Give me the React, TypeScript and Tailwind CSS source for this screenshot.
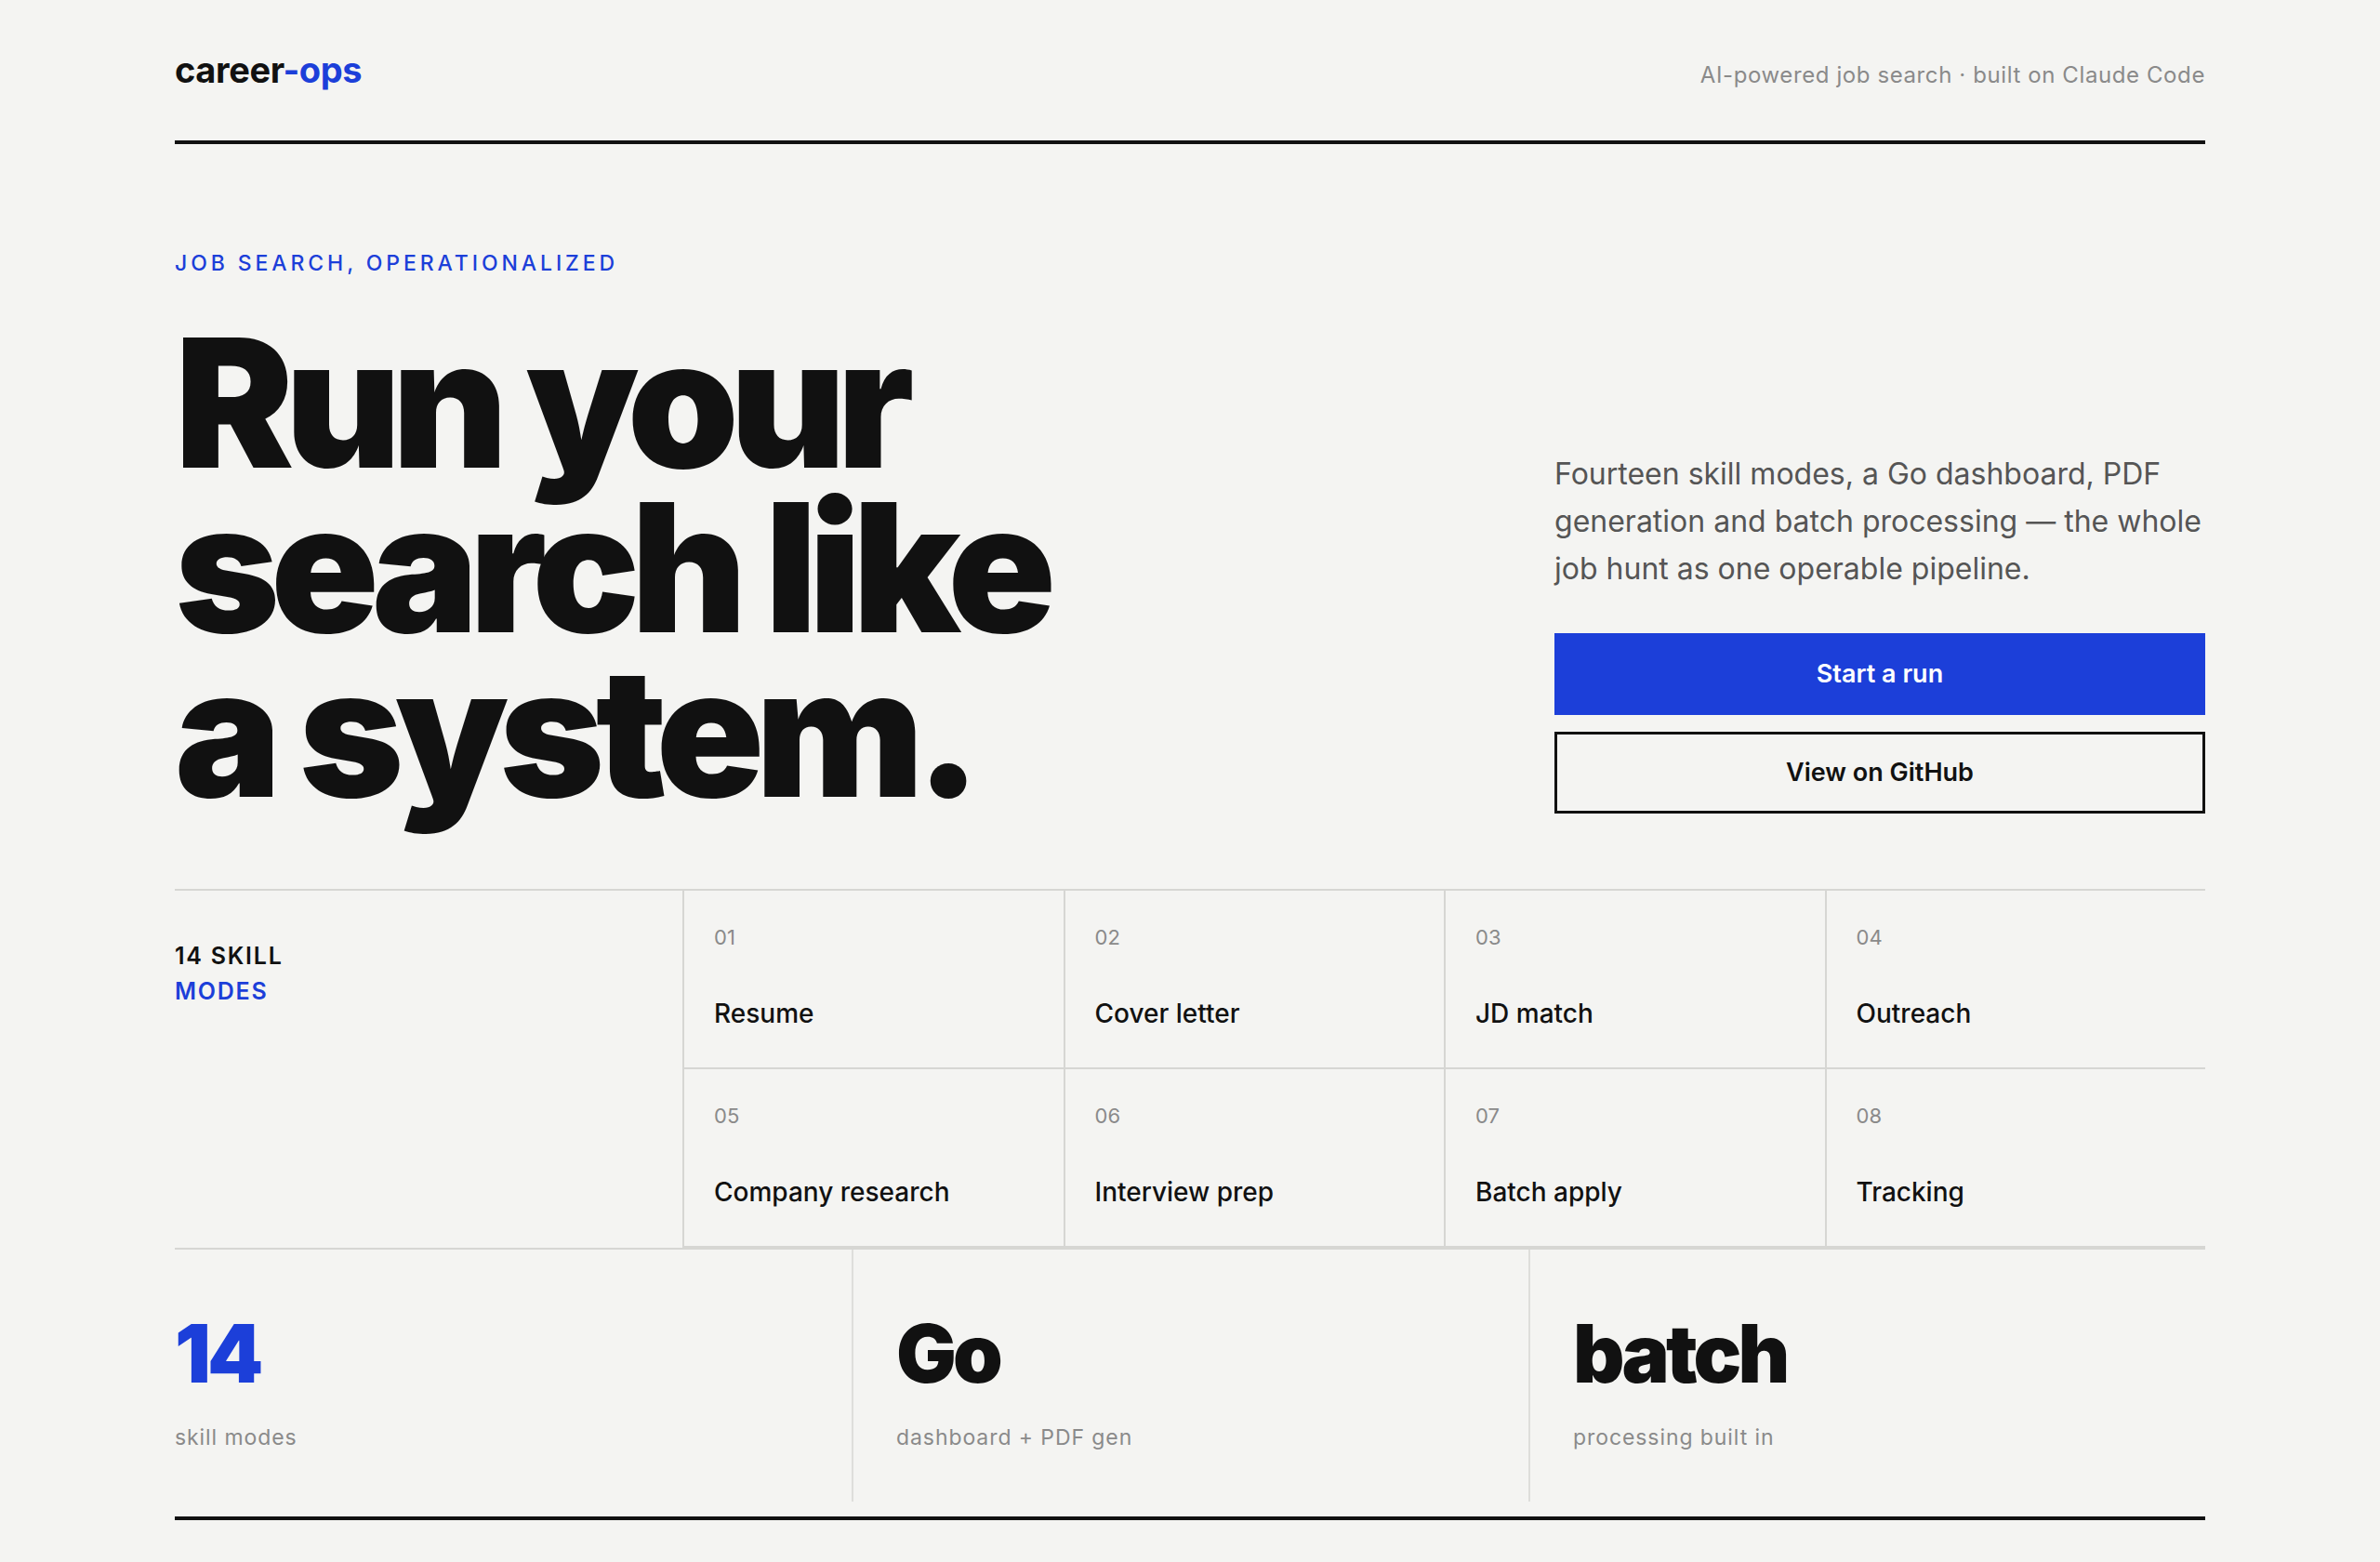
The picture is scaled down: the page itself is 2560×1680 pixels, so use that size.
const skills = [
  { n: "01", name: "Resume" },
  { n: "02", name: "Cover letter" },
  { n: "03", name: "JD match" },
  { n: "04", name: "Outreach" },
  { n: "05", name: "Company research" },
  { n: "06", name: "Interview prep" },
  { n: "07", name: "Batch apply" },
  { n: "08", name: "Tracking" },
];

const stats = [
  { value: "14", label: "skill modes", blue: true },
  { value: "Go", label: "dashboard + PDF gen", blue: false },
  { value: "batch", label: "processing built in", blue: false },
];

export default function App() {
  return (
    <div className="min-h-screen bg-[#f4f4f2] font-['Inter','Noto_Sans',sans-serif] text-[#111]">
      <div className="mx-auto w-[2184px]">
        {/* Header */}
        <header className="flex items-baseline justify-between border-b-4 border-[#111] pt-[56px] pb-[57px]">
          <div className="text-[38px] font-bold leading-none tracking-[-0.01em]">
            career<span className="text-[#1c3fd9]">-ops</span>
          </div>
          <div className="text-[24px] leading-none tracking-[0.025em] text-[#8a8a8a]">
            AI-powered job search · built on Claude Code
          </div>
        </header>

        {/* Hero */}
        <section className="mt-[117px] flex items-end justify-between">
          <div>
            <p className="text-[23px] font-medium uppercase leading-none tracking-[0.17em] text-[#1c3fd9]">
              Job search, operationalized
            </p>
            <h1 className="mt-[50px] text-[192px] font-black leading-[177px] tracking-[-0.05em]">
              Run your
              <br />
              search like
              <br />a system.
            </h1>
          </div>
          <div className="w-[700px] pb-px">
            <p className="text-[32px] leading-[51px] text-[#555]">
              Fourteen skill modes, a Go dashboard, PDF generation and batch processing — the whole job hunt as one
              operable pipeline.
            </p>
            <div className="mt-[44px] flex flex-col gap-[18px]">
              <button className="h-[88px] w-full bg-[#1c3fd9] text-[27px] font-semibold text-white">
                Start a run
              </button>
              <button className="h-[88px] w-full border-[3px] border-[#111] text-[27px] font-semibold text-[#111]">
                View on GitHub
              </button>
            </div>
          </div>
        </section>

        {/* Skill modes */}
        <section className="mt-[80px] grid grid-cols-4 border-y-2 border-[#d6d6d3]">
          <div className="pt-[51px] text-[25px] font-semibold uppercase leading-[38px] tracking-[0.07em]">
            <div>14 skill</div>
            <div className="text-[#1c3fd9]">modes</div>
          </div>
          <div className="col-span-3 grid grid-cols-4">
            {skills.map((s) => (
              <div key={s.n} className="flex h-[192px] flex-col border-b-2 border-l-2 border-[#d6d6d3] pl-[32px] pt-[39px]">
                <span className="text-[22px] leading-none text-[#8a8a8a]">{s.n}</span>
                <span className="mt-[57px] text-[28px] font-medium leading-none text-[#111]">{s.name}</span>
              </div>
            ))}
          </div>
        </section>

        {/* Stats */}
        <section className="grid grid-cols-3">
          {stats.map((s, i) => (
            <div
              key={s.value}
              className={
                i === 0
                  ? "pt-[69px] pb-[57px]"
                  : "border-l-2 border-[#dededb] pl-[46px] pt-[69px] pb-[57px]"
              }
            >
              <div
                className={
                  s.blue
                    ? "text-[86px] font-black leading-none tracking-[-0.045em] text-[#1c3fd9]"
                    : "text-[86px] font-black leading-none tracking-[-0.045em] text-[#111]"
                }
              >
                {s.value}
              </div>
              <div className="mt-[36px] text-[23px] leading-none tracking-[0.04em] text-[#8a8a8a]">{s.label}</div>
            </div>
          ))}
        </section>
        <div className="mt-[16px] h-[4px] bg-[#111]" />
      </div>
    </div>
  );
}
